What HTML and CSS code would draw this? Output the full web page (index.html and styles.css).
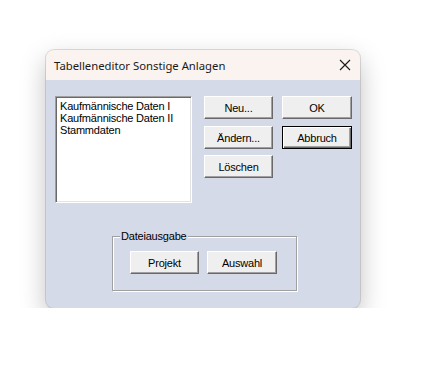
FILE: index.html
```html
<!DOCTYPE html>
<html>
<head>
<meta charset="utf-8">
<link rel="stylesheet" href="styles.css">
</head>
<body>
<div class="window">
  <div class="titlebar">
    <span class="title">Tabelleneditor Sonstige Anlagen</span>
    <svg class="close" width="12" height="12" viewBox="0 0 12 12"><path d="M1 1 L11 11 M11 1 L1 11" stroke="#1a1a1a" stroke-width="1.1" fill="none"/></svg>
  </div>
  <div class="client">
    <div class="toprow">
      <div class="listbox">
        <div class="item">Kaufmännische Daten I</div>
        <div class="item">Kaufmännische Daten II</div>
        <div class="item">Stammdaten</div>
      </div>
      <div class="buttons">
        <div class="btn">Neu...</div>
        <div class="btn wide">OK</div>
        <div class="btn">Ändern...</div>
        <div class="btn wide default">Abbruch</div>
        <div class="btn">Löschen</div>
      </div>
    </div>
    <div class="group">
      <span class="legend">Dateiausgabe</span>
      <div class="btn">Projekt</div>
      <div class="btn wide">Auswahl</div>
    </div>
  </div>
</div>
</body>
</html>
```
FILE: styles.css
```css
html, body {
  margin: 0;
  padding: 0;
  background: #ffffff;
}
body {
  padding: 50px 0 0 46px;
}
.window {
  width: 314px;
  height: 258px;
  border-radius: 8px;
  overflow: hidden;
  background: #d5dae9;
  box-shadow: 0 0 0 1px rgba(0,0,0,0.12), 0 10px 26px rgba(0,0,0,0.25);
  font-family: "Liberation Sans", Arial, sans-serif;
  font-size: 11px;
  letter-spacing: -0.2px;
  color: #000;
}
.titlebar {
  height: 30px;
  background: #faf3ef;
  display: flex;
  align-items: center;
  justify-content: space-between;
  padding: 0 9px 0 8px;
}
.title {
  font-family: "Noto Sans", "Open Sans", sans-serif;
  font-size: 11.3px;
  letter-spacing: 0;
  color: #1a1a1a;
}
.close {
  display: block;
}
.client {
  padding: 16px 0 0 9px;
}
.toprow {
  display: flex;
  gap: 12px;
}
.listbox {
  width: 137px;
  height: 107px;
  box-sizing: border-box;
  background: #fff;
  border-top: 1px solid #a0a0a0;
  border-left: 1px solid #a0a0a0;
  border-right: 1px solid #ffffff;
  border-bottom: 1px solid #ffffff;
  box-shadow: inset 1px 1px 0 #696969, inset -1px -1px 0 #e3e3e3;
  padding: 3px 0 0 4px;
}
.item {
  line-height: 12px;
  white-space: nowrap;
}
.buttons {
  display: grid;
  grid-template-columns: 69px 70px;
  grid-auto-rows: 23px;
  column-gap: 9px;
  row-gap: 7px;
  align-content: start;
}
.btn {
  width: 69px;
  height: 23px;
  box-sizing: border-box;
  background: #efefef;
  border-top: 1px solid #ffffff;
  border-left: 1px solid #ffffff;
  border-right: 1px solid #696969;
  border-bottom: 1px solid #696969;
  box-shadow: inset -1px -1px 0 #a0a0a0;
  display: flex;
  align-items: center;
  justify-content: center;
  white-space: nowrap;
  padding-top: 1px;
}
.btn.wide {
  width: 70px;
}
.btn.default {
  border: 1px solid #000;
  box-shadow: inset 1px 1px 0 #ffffff, inset -1px -1px 0 #696969, inset -2px -2px 0 #a0a0a0;
}
.buttons .btn:nth-child(5) {
  margin-top: -1px;
}
.group {
  position: relative;
  margin: 33px 0 0 57px;
  width: 185px;
  height: 55px;
  box-sizing: border-box;
  border: 1px solid #a0a0a0;
  box-shadow: inset 1px 1px 0 #ffffff, 1px 1px 0 #ffffff;
  display: flex;
  gap: 8px;
  padding: 14px 0 0 17px;
}
.legend {
  position: absolute;
  left: 7px;
  top: -7px;
  background: #d5dae9;
  padding: 0 1px;
  line-height: 13px;
}
```
